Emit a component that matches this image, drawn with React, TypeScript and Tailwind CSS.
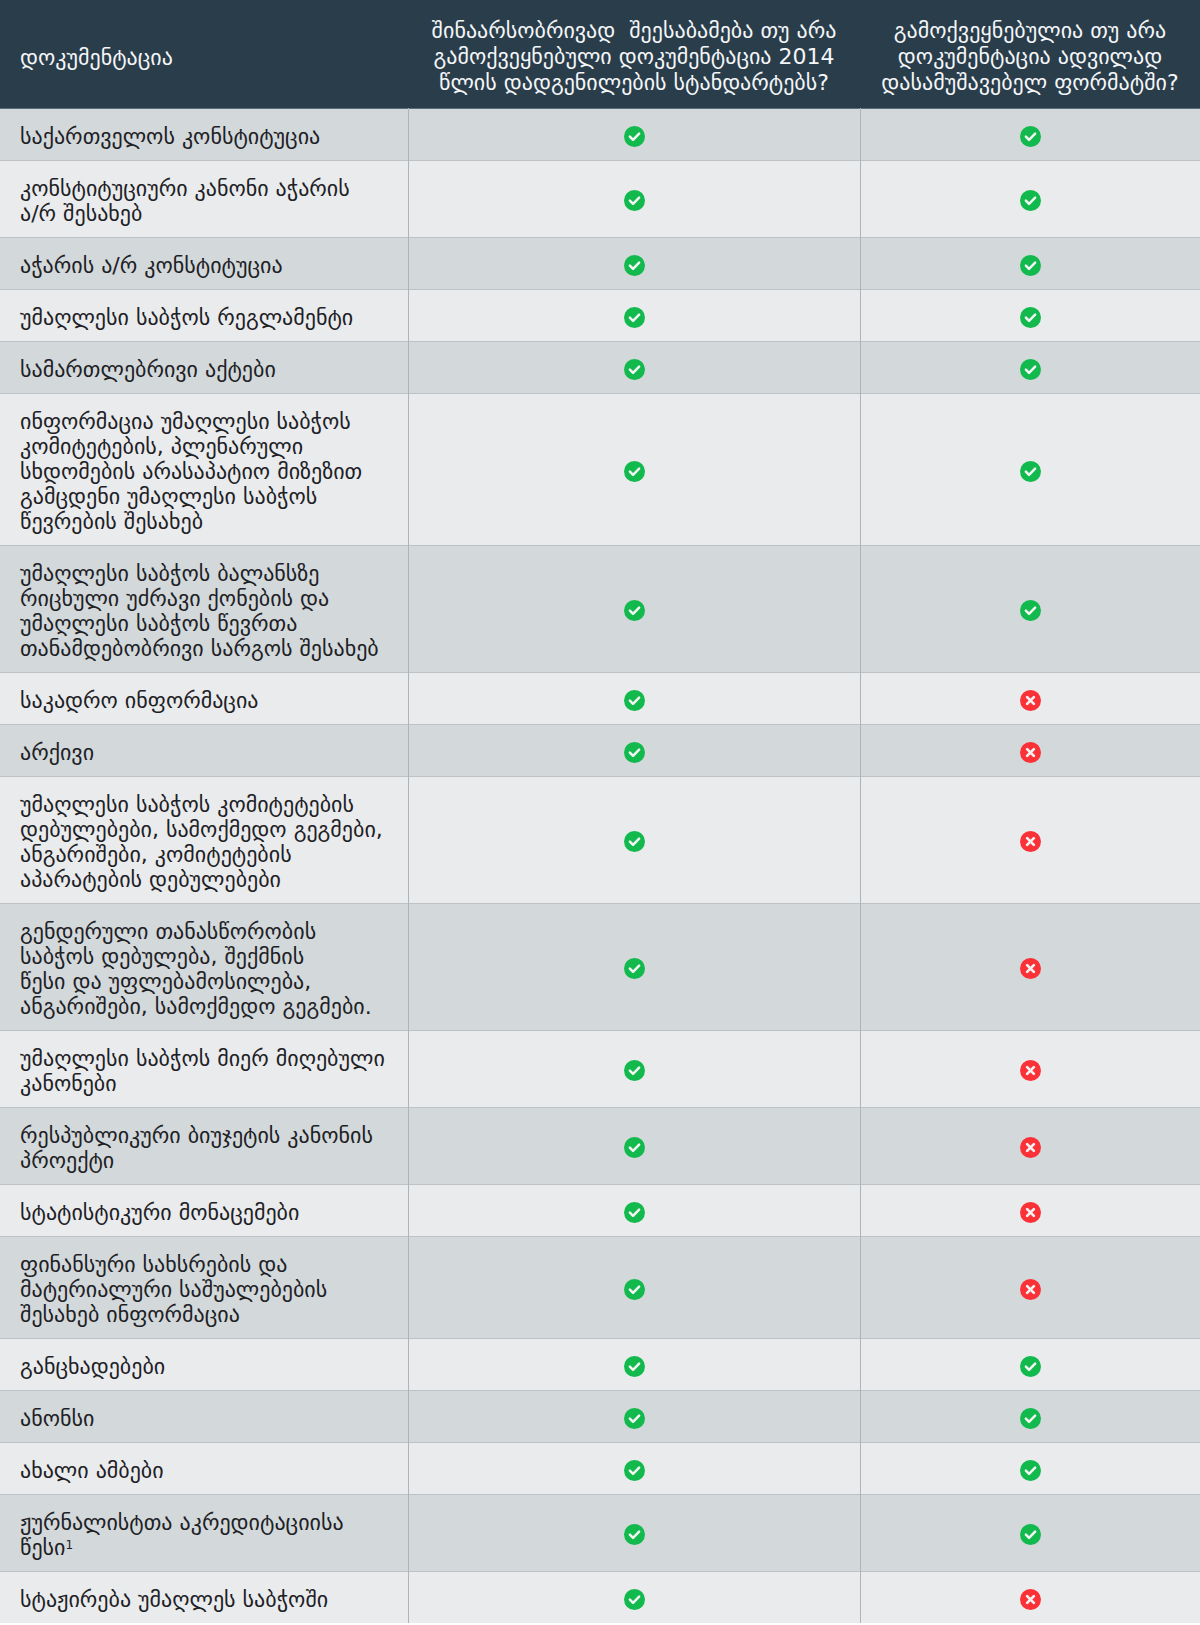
import type { ReactNode } from 'react';

type Row = { lines: ReactNode[]; content: boolean; format: boolean };

const ROWS: Row[] = [
  { lines: ['საქართველოს კონსტიტუცია'], content: true, format: true },
  { lines: ['კონსტიტუციური კანონი აჭარის', 'ა/რ შესახებ'], content: true, format: true },
  { lines: ['აჭარის ა/რ კონსტიტუცია'], content: true, format: true },
  { lines: ['უმაღლესი საბჭოს რეგლამენტი'], content: true, format: true },
  { lines: ['სამართლებრივი აქტები'], content: true, format: true },
  {
    lines: [
      'ინფორმაცია უმაღლესი საბჭოს',
      'კომიტეტების, პლენარული',
      'სხდომების არასაპატიო მიზეზით',
      'გამცდენი უმაღლესი საბჭოს',
      'წევრების შესახებ',
    ],
    content: true,
    format: true,
  },
  {
    lines: [
      'უმაღლესი საბჭოს ბალანსზე',
      'რიცხული უძრავი ქონების და',
      'უმაღლესი საბჭოს წევრთა',
      'თანამდებობრივი სარგოს შესახებ',
    ],
    content: true,
    format: true,
  },
  { lines: ['საკადრო ინფორმაცია'], content: true, format: false },
  { lines: ['არქივი'], content: true, format: false },
  {
    lines: [
      'უმაღლესი საბჭოს კომიტეტების',
      'დებულებები, სამოქმედო გეგმები,',
      'ანგარიშები, კომიტეტების',
      'აპარატების დებულებები',
    ],
    content: true,
    format: false,
  },
  {
    lines: [
      'გენდერული თანასწორობის',
      'საბჭოს დებულება, შექმნის',
      'წესი და უფლებამოსილება,',
      'ანგარიშები, სამოქმედო გეგმები.',
    ],
    content: true,
    format: false,
  },
  { lines: ['უმაღლესი საბჭოს მიერ მიღებული', 'კანონები'], content: true, format: false },
  { lines: ['რესპუბლიკური ბიუჯეტის კანონის', 'პროექტი'], content: true, format: false },
  { lines: ['სტატისტიკური მონაცემები'], content: true, format: false },
  {
    lines: ['ფინანსური სახსრების და', 'მატერიალური საშუალებების', 'შესახებ ინფორმაცია'],
    content: true,
    format: false,
  },
  { lines: ['განცხადებები'], content: true, format: true },
  { lines: ['ანონსი'], content: true, format: true },
  { lines: ['ახალი ამბები'], content: true, format: true },
  {
    lines: [
      'ჟურნალისტთა აკრედიტაციისა',
      <>
        წესი<sup className="text-[12px]">1</sup>
      </>,
    ],
    content: true,
    format: true,
  },
  { lines: ['სტაჟირება უმაღლეს საბჭოში'], content: true, format: false },
];

function Mark({ ok }: { ok: boolean }) {
  return ok ? (
    <svg width="21" height="21" viewBox="0 0 20 20" className="mx-auto block">
      <circle cx="10" cy="10" r="10" fill="#12b94d" />
      <path
        d="M5.6 10.2l3 3 5.8-5.9"
        fill="none"
        stroke="#f2f5f3"
        strokeWidth="2.4"
        strokeLinecap="round"
        strokeLinejoin="round"
      />
    </svg>
  ) : (
    <svg width="21" height="21" viewBox="0 0 20 20" className="mx-auto block">
      <circle cx="10" cy="10" r="10" fill="#fb3138" />
      <path
        d="M6.8 6.8l6.4 6.4M13.2 6.8l-6.4 6.4"
        fill="none"
        stroke="#f5f0f0"
        strokeWidth="2.6"
        strokeLinecap="round"
      />
    </svg>
  );
}

function Lines({ lines }: { lines: ReactNode[] }) {
  return (
    <>
      {lines.map((l, i) => (
        <span key={i} className="block whitespace-pre">
          {l}
        </span>
      ))}
    </>
  );
}

export default function App() {
  return (
    <div className="w-[1200px] bg-[#eaebed] font-['DejaVu_Sans',sans-serif] text-[22px] text-[#1d2125]">
      <table className="w-full table-fixed border-collapse">
        <colgroup>
          <col className="w-[408px]" />
          <col className="w-[452px]" />
          <col className="w-[340px]" />
        </colgroup>
        <thead>
          <tr className="h-[108px] border-b border-[#5b6a75] bg-[#2a3d4b] text-[#f4f6f8]">
            <th className="px-5 pt-[7px] text-left align-middle font-normal">დოკუმენტაცია</th>
            <th className="px-1 pt-[6px] text-center align-middle font-normal leading-[26px]">
              <Lines
                lines={[
                  'შინაარსობრივად  შეესაბამება თუ არა',
                  'გამოქვეყნებული დოკუმენტაცია 2014',
                  'წლის დადგენილების სტანდარტებს?',
                ]}
              />
            </th>
            <th className="px-1 pt-[6px] text-center align-middle font-normal leading-[26px]">
              <Lines
                lines={['გამოქვეყნებულია თუ არა', 'დოკუმენტაცია ადვილად', 'დასამუშავებელ ფორმატში?']}
              />
            </th>
          </tr>
        </thead>
        <tbody>
          {ROWS.map((r, i) => (
            <tr
              key={i}
              className={`border-b border-[#bcc2c6] last:border-b-0 ${i % 2 === 0 ? 'bg-[#d3d8db]' : 'bg-[#eaebed]'}`}
            >
              <td className="border-r border-[#aeb4b8] px-5 pt-[15px] pb-[11px] align-middle leading-[25px]">
                <Lines lines={r.lines} />
              </td>
              <td className="border-r border-[#aeb4b8] pt-[4px] align-middle">
                <Mark ok={r.content} />
              </td>
              <td className="pt-[4px] align-middle">
                <Mark ok={r.format} />
              </td>
            </tr>
          ))}
        </tbody>
      </table>
    </div>
  );
}
